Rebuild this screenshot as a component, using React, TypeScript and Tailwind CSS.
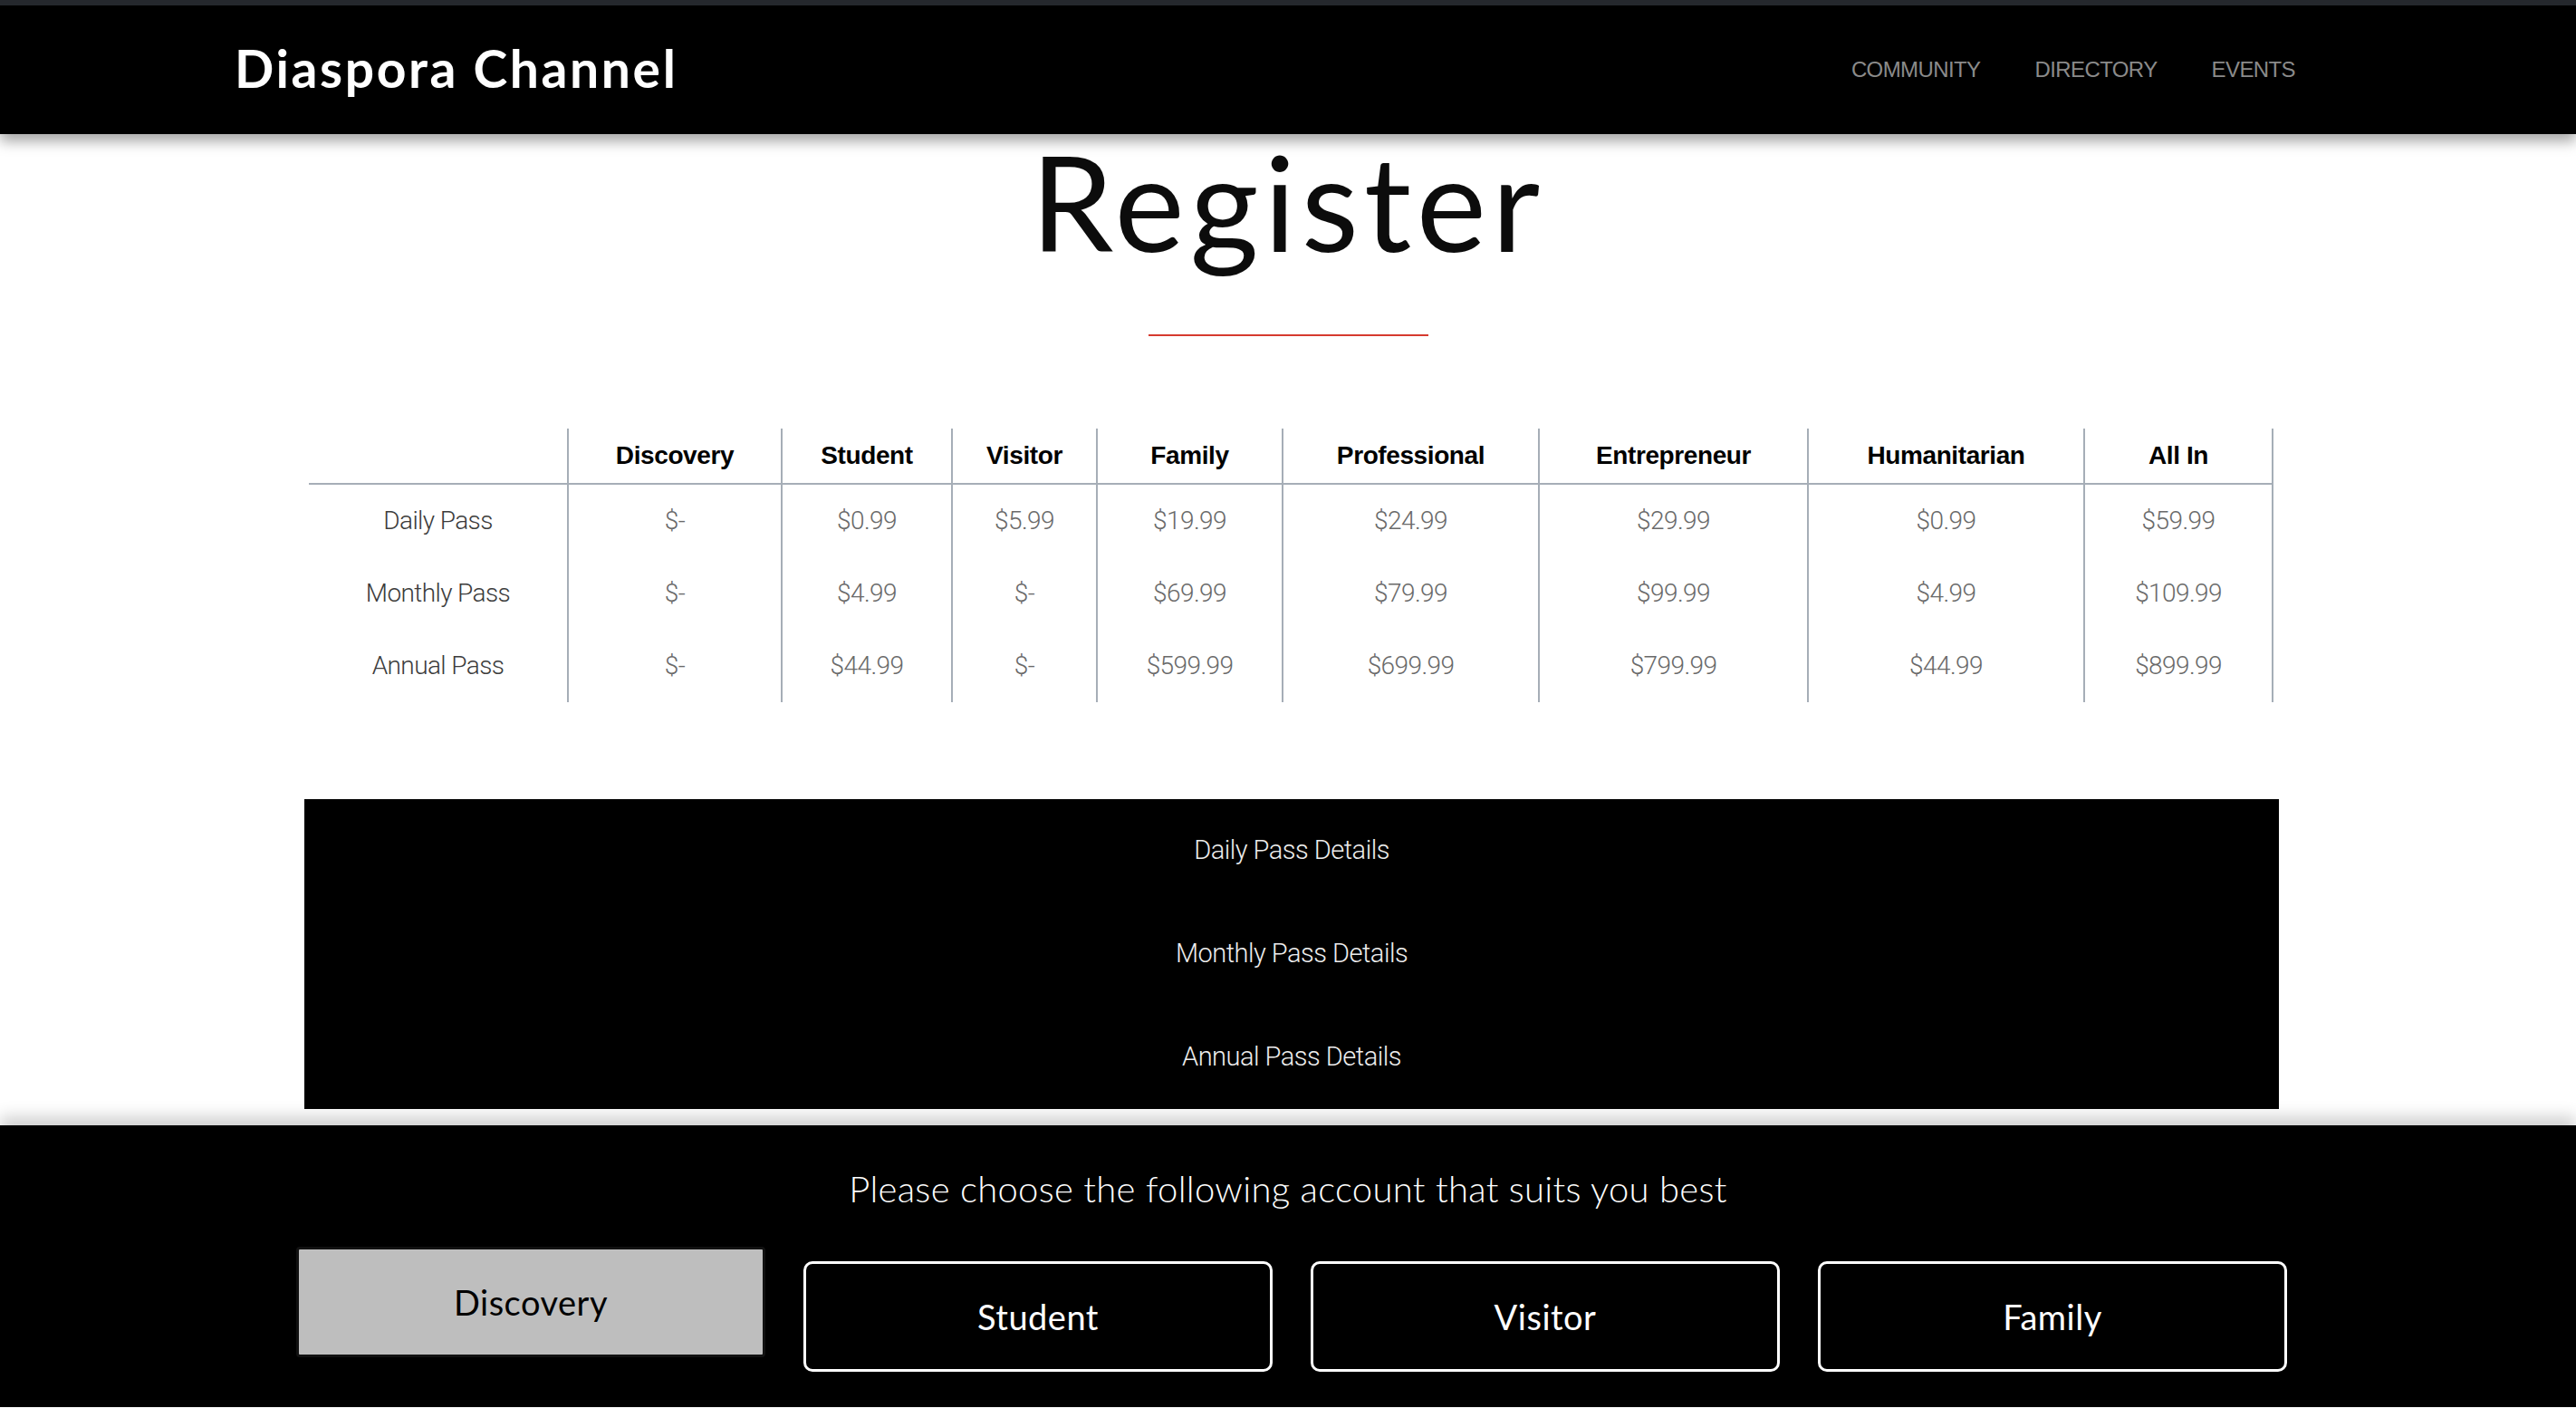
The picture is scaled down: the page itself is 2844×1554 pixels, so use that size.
import React from "react";

const tiers = ["Discovery", "Student", "Visitor", "Family", "Professional", "Entrepreneur", "Humanitarian", "All In"];

const rows = [
  { label: "Daily Pass", prices: ["$-", "$0.99", "$5.99", "$19.99", "$24.99", "$29.99", "$0.99", "$59.99"] },
  { label: "Monthly Pass", prices: ["$-", "$4.99", "$-", "$69.99", "$79.99", "$99.99", "$4.99", "$109.99"] },
  { label: "Annual Pass", prices: ["$-", "$44.99", "$-", "$599.99", "$699.99", "$799.99", "$44.99", "$899.99"] },
];

const accounts = ["Discovery", "Student", "Visitor", "Family"];

export default function App() {
  return (
    <div className="w-full min-h-screen bg-white flex flex-col">
      {/* Top nav */}
      <div className="relative z-20 shadow-[0_8px_14px_rgba(0,0,0,0.35)]">
        <div className="h-[6px] bg-[#25282d]" />
        <header className="h-[142px] bg-black flex items-center justify-between pl-[259px] pr-[310px]">
          <h1 className="font-['Lato',sans-serif] font-bold text-[57px] leading-none text-white tracking-[2.6px] pb-[4px]">
            Diaspora Channel
          </h1>
          <nav className="flex items-center gap-[60px] font-['Liberation_Sans',Arial,sans-serif] text-[24px] text-[#8a8a8a] tracking-[-0.6px]">
            <a>COMMUNITY</a>
            <a>DIRECTORY</a>
            <a>EVENTS</a>
          </nav>
        </header>
      </div>

      <main className="flex flex-col items-center">
        <h2 className="mt-[1px] h-[146px] font-['Lato',sans-serif] text-[146px] leading-none text-[#0c0c0c] tracking-[6px]">
          Register
        </h2>
        <div className="mt-[74px] w-[309px] h-[2px] bg-[#d63a2f]" />

        {/* Price table */}
        <div className="mt-[102px] ml-[7px] grid grid-cols-[285px_236px_188px_160px_205px_283px_297px_305px_210px]">
          <div className="h-[62px] border-b-2 border-[#a6aeb7]" />
          {tiers.map((t, i) => (
            <div
              key={t}
              className={`h-[62px] flex items-center justify-center border-b-2 border-l-2 border-[#a6aeb7] font-['Liberation_Sans',Arial,sans-serif] font-bold text-[28px] text-black tracking-[-0.4px] ${i === tiers.length - 1 ? "border-r-2" : ""}`}
            >
              {t}
            </div>
          ))}
          {rows.map((r) => (
            <React.Fragment key={r.label}>
              <div className="h-[80px] flex items-center justify-center font-['Roboto',sans-serif] font-light text-[28px] text-[#3c3c3c] tracking-[-0.6px]">
                {r.label}
              </div>
              {r.prices.map((p, i) => (
                <div
                  key={i}
                  className={`h-[80px] flex items-center justify-center border-l-2 border-[#a6aeb7] font-['Roboto',sans-serif] font-light text-[28px] text-[#6a6a6a] tracking-[-0.6px] ${i === r.prices.length - 1 ? "border-r-2" : ""}`}
                >
                  {p}
                </div>
              ))}
            </React.Fragment>
          ))}
        </div>

        {/* Pass details */}
        <div className="mt-[107px] ml-[8px] w-[2180px] bg-black flex flex-col font-['Roboto',sans-serif] font-light text-[29px] text-[#ececec] tracking-[-0.5px]">
          <div className="h-[114px] flex items-center justify-center">Daily Pass Details</div>
          <div className="h-[114px] flex items-center justify-center">Monthly Pass Details</div>
          <div className="h-[114px] flex items-center justify-center">Annual Pass Details</div>
        </div>
      </main>

      {/* Account chooser */}
      <footer className="relative z-20 mt-[18px] h-[311px] bg-black shadow-[0_-10px_16px_rgba(0,0,0,0.18)] flex flex-col">
        <p className="pt-[47px] text-center font-['Lato',sans-serif] font-light text-[40px] leading-[46px] text-white tracking-[0.3px]">
          Please choose the following account that suits you best
        </p>
        <div className="flex items-start gap-[42px] pl-[327px]">
          {accounts.map((a, i) =>
            i === 0 ? (
              <button
                key={a}
                className="mt-[41px] w-[518px] h-[122px] border-[3px] border-[#111] rounded-[4px] bg-[#bebebe] font-['Lato',sans-serif] text-[38px] text-black tracking-[0.5px]"
              >
                {a}
              </button>
            ) : (
              <button
                key={a}
                className="mt-[57px] w-[518px] h-[122px] border-[3px] border-white rounded-[10px] bg-black font-['Lato',sans-serif] text-[38px] text-white tracking-[0.5px]"
              >
                {a}
              </button>
            )
          )}
        </div>
      </footer>
    </div>
  );
}
